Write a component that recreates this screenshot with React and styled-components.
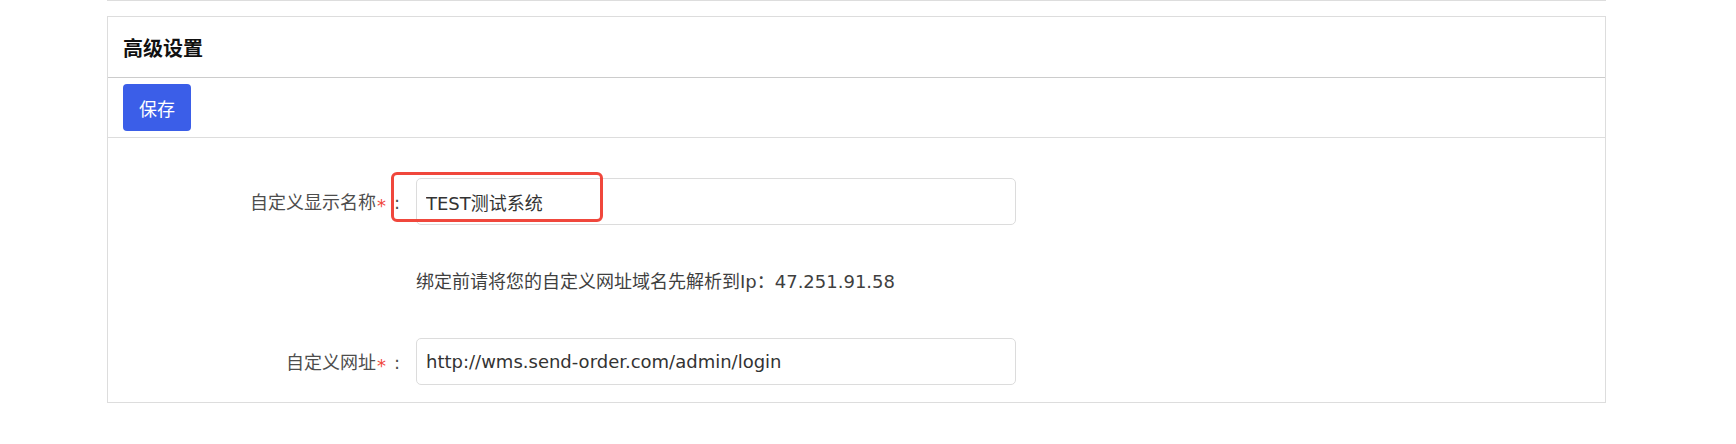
import React from "react";
import styled, { createGlobalStyle } from "styled-components";

const GlobalStyle = createGlobalStyle`
  body {
    margin: 0;
    background: #ffffff;
    font-family: "DejaVu Sans", "Noto Sans CJK SC", sans-serif;
    color: #333333;
  }
`;

const Page = styled.div`
  width: 1499px;
  padding-left: 107px;
`;

const TopRule = styled.div`
  border-top: 1px solid #dddddd;
`;

const Panel = styled.section`
  margin-top: 15px;
  border: 1px solid #dddddd;
  background: #ffffff;
`;

const PanelHeader = styled.div`
  display: flex;
  align-items: center;
  height: 60px;
  padding: 0 15px;
  border-bottom: 1px solid #cccccc;
`;

const Title = styled.h3`
  margin: 0;
  font-size: 20px;
  font-weight: 700;
  color: #111111;
  font-family: "Noto Sans CJK SC", sans-serif;
`;

const Toolbar = styled.div`
  display: flex;
  align-items: center;
  padding: 6px 15px;
  border-bottom: 1px solid #dddddd;
`;

const Button = styled.button`
  height: 47px;
  padding: 0 16px;
  border: none;
  border-radius: 4px;
  background: #3b5ee8;
  color: #ffffff;
  font-size: 18px;
  font-family: "Noto Sans CJK SC", sans-serif;
  cursor: pointer;
`;

const FormBody = styled.div`
  display: flex;
  flex-direction: column;
  padding: 40px 0 17px;
`;

const FormRow = styled.div`
  position: relative;
  display: grid;
  grid-template-columns: 300px 600px;
  column-gap: 8px;
  align-items: center;
  margin-top: ${(p) => p.$gap || 0}px;
`;

const Label = styled.label`
  text-align: right;
  font-size: 18px;
  color: #4d4d4d;
  white-space: nowrap;
`;

const Required = styled.span`
  color: #f0473c;
  vertical-align: -3px;
  margin-left: 1px;
`;

const Colon = styled.span`
  display: inline-block;
  width: 22px;
  text-align: center;
`;

const Input = styled.input`
  box-sizing: border-box;
  width: 600px;
  height: 47px;
  padding: 0 9px;
  border: 1px solid #dcdcdc;
  border-radius: 5px;
  font-size: 18px;
  font-family: "DejaVu Sans", "Noto Sans CJK SC", sans-serif;
  color: #333333;
  outline: none;
`;

const Hint = styled.div`
  grid-column: 2;
  font-size: 18px;
  line-height: 26px;
  color: #3f3f3f;
`;

const Highlight = styled.div`
  position: absolute;
  left: 283px;
  top: -6px;
  width: 212px;
  height: 50px;
  box-sizing: border-box;
  border: 3px solid #f0473c;
  border-radius: 6px;
  pointer-events: none;
`;

export default function App() {
  const [name, setName] = React.useState("TEST测试系统");
  const [url, setUrl] = React.useState("http://wms.send-order.com/admin/login");

  return (
    <>
      <GlobalStyle />
      <Page>
        <TopRule />
        <Panel>
          <PanelHeader>
            <Title>高级设置</Title>
          </PanelHeader>
          <Toolbar>
            <Button type="button">保存</Button>
          </Toolbar>
          <FormBody>
            <FormRow>
              <Label htmlFor="displayName">
                自定义显示名称<Required>*</Required>
                <Colon>:</Colon>
              </Label>
              <Input
                id="displayName"
                value={name}
                onChange={(ev) => setName(ev.target.value)}
              />
              <Highlight />
            </FormRow>
            <FormRow $gap={44}>
              <Hint>绑定前请将您的自定义网址域名先解析到Ip：47.251.91.58</Hint>
            </FormRow>
            <FormRow $gap={43}>
              <Label htmlFor="customUrl">
                自定义网址<Required>*</Required>
                <Colon>:</Colon>
              </Label>
              <Input
                id="customUrl"
                value={url}
                onChange={(ev) => setUrl(ev.target.value)}
              />
            </FormRow>
          </FormBody>
        </Panel>
      </Page>
    </>
  );
}
